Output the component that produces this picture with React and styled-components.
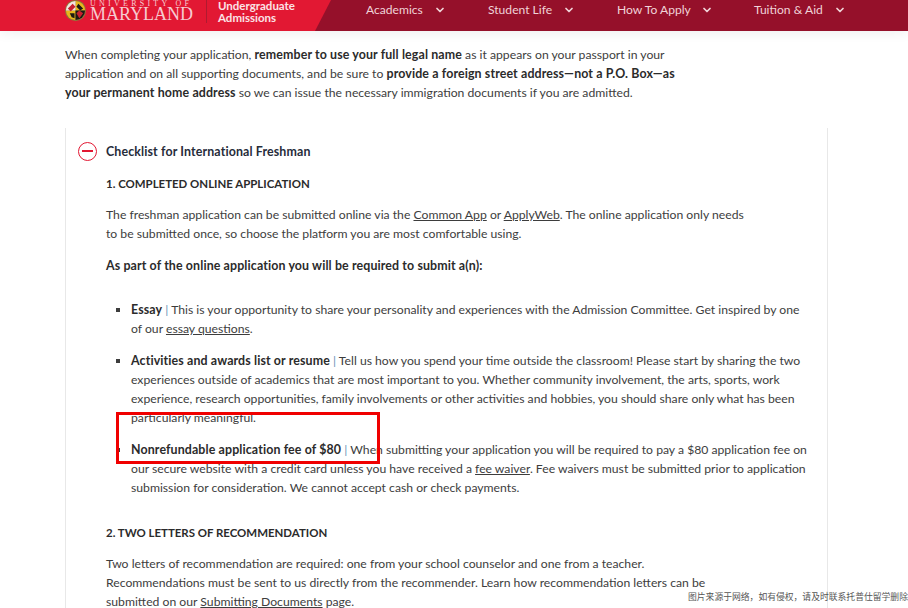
import styled, { createGlobalStyle } from 'styled-components';
import { ChevronDown } from 'lucide-react';

const Global = createGlobalStyle`
    html, body { margin: 0; padding: 0; background: #fff; }
    body {
        width: 908px;
        height: 608px;
        overflow: hidden;
        position: relative;
        font-family: "Lato", "Liberation Sans", sans-serif;
        color: #3d3d3d;
    }
`;

const Header = styled.header`
    height: 31px;
    display: flex;
    background: #95102a;
    box-shadow: 0 3px 12px rgba(0, 0, 0, 0.06);
`;
const Brand = styled.div`
    width: 331px;
    flex: none;
    padding-left: 65px;
    box-sizing: border-box;
    display: flex;
    align-items: flex-start;
    background: #e21833;
    clip-path: polygon(0 0, 100% 0, 315px 100%, 0 100%);
`;
const Seal = styled.svg`
    width: 21px;
    height: 21px;
    flex: none;
`;
const Wordmark = styled.div`
    margin-left: 4px;
    width: 103px;
    flex: none;
    color: #f6cbd1;
    font-family: "Liberation Serif", serif;
    display: flex;
    flex-direction: column;
`;
const WordTop = styled.span`
    font-size: 8px;
    line-height: 8px;
    letter-spacing: 3.25px;
    white-space: nowrap;
`;
const WordMain = styled.span`
    font-size: 18px;
    line-height: 13px;
    white-space: nowrap;
`;
const Divider = styled.div`
    width: 1px;
    height: 23px;
    flex: none;
    margin: 0 11px 0 13px;
    background: #b01a30;
`;
const Unit = styled.div`
    color: #fbe3e6;
    font-size: 11.5px;
    font-weight: 700;
    line-height: 11.5px;
    white-space: nowrap;
`;
const Nav = styled.nav`
    flex: 1;
    display: flex;
    align-items: flex-start;
    padding: 2px 0 0 35px;
`;
const NavItem = styled.a`
    display: flex;
    align-items: center;
    width: ${props => props.$w}px;
    flex: none;
    color: #f0d3d8;
    font-size: 12.1px;
    line-height: 15px;
    white-space: nowrap;
    svg {
        margin-left: ${props => props.$gap}px;
    }
`;
const Page = styled.main`
    padding: 14px 0 0 65px;
    width: 763px;
`;
const Text = styled.p`
    margin: 0;
    font-size: 12.2px;
    line-height: 19px;
    white-space: nowrap;
`;
const Panel = styled.section`
    margin-top: 26px;
    height: 480px;
    padding: 13px 0 0 12px;
    box-sizing: border-box;
    border-left: 1px solid #e8e8e8;
    border-right: 1px solid #e8e8e8;
`;
const PanelTitle = styled.div`
    display: flex;
    align-items: center;
    gap: 9px;
    height: 20px;
    font-size: 12.4px;
    letter-spacing: 0.13px;
    font-weight: 700;
    color: #262c3a;
`;
const Toggle = styled.span`
    width: 17px;
    height: 17px;
    border: 1.5px solid #e21833;
    border-radius: 50%;
    display: flex;
    align-items: center;
    justify-content: center;
    flex: none;
    &::before {
        content: "";
        width: 11px;
        height: 1.5px;
        background: #e21833;
    }
`;
const Body = styled.div`
    padding-left: 28px;
`;
const Step = styled.h3`
    margin: ${props => props.$top}px 0 0;
    font-size: 11.45px;
    line-height: 19px;
    font-weight: 700;
    color: #2b2b2b;
`;
const Para = styled(Text)`
    margin-top: ${props => props.$top}px;
`;
const Strong = styled.b`
    color: #2b2b2b;
    font-weight: 700;
    font-size: 12.4px;
    letter-spacing: 0.12px;
`;
const Ul = styled.ul`
    margin: 25px 0 0;
    padding: 0 0 0 25px;
    list-style: square;
`;
const Li = styled.li`
    margin-bottom: 13px;
    font-size: 12.2px;
    line-height: 19px;
    white-space: nowrap;
`;
const Link = styled.a`
    color: #3d3d3d;
    text-decoration: underline;
`;
const Pipe = styled.span`
    color: #6a93b8;
`;
const Highlight = styled.div`
    position: absolute;
    left: 116px;
    top: 412px;
    width: 258px;
    height: 46px;
    border: 3px solid #f00000;
`;
const Watermark = styled.div`
    position: absolute;
    left: 688px;
    top: 590px;
    font-family: "Noto Sans CJK SC", sans-serif;
    font-size: 8.8px;
    line-height: 14px;
    color: #555;
    white-space: nowrap;
`;

const navItems = [
    { label: 'Academics', w: 122, gap: 11 },
    { label: 'Student Life', w: 129, gap: 11 },
    { label: 'How To Apply', w: 137, gap: 10 },
    { label: 'Tuition & Aid', w: 100, gap: 11 },
];

const App = () => (
    <>
        <Global />
        <Header>
            <Brand>
                <Seal viewBox="0 0 22 22">
                    <circle cx="11" cy="11" r="11" fill="#8a7a3a" />
                    <path d="M11 1a10 10 0 0 1 10 10H11z" fill="#e8b71c" />
                    <path d="M11 21A10 10 0 0 1 1 11h10z" fill="#e8b71c" />
                    <path d="M11 1A10 10 0 0 0 1 11h10z" fill="#f3e4e0" />
                    <path d="M11 21a10 10 0 0 0 10-10H11z" fill="#1c1a14" />
                    <path d="M3 9l5-5 3 3-5 5zM12 14l3-3 4 3-4 5z" fill="#c8202f" />
                    <path d="M14 4l5 5-3 2-4-4zM5 14l5 0 0 5-3-1z" fill="#1c1a14" />
                </Seal>
                <Wordmark>
                    <WordTop>UNIVERSITY OF</WordTop>
                    <WordMain>MARYLAND</WordMain>
                </Wordmark>
                <Divider />
                <Unit>Undergraduate<br />Admissions</Unit>
            </Brand>
            <Nav>
                {navItems.map(item => (
                    <NavItem key={item.label} $w={item.w} $gap={item.gap}>
                        {item.label}
                        <ChevronDown size={12} strokeWidth={3.5} />
                    </NavItem>
                ))}
            </Nav>
        </Header>
        <Page>
            <Text>
                When completing your application, <Strong>remember to use your full legal name</Strong> as it appears on your passport in your<br />
                application and on all supporting documents, and be sure to <Strong>provide a foreign street address—not a P.O. Box—as</Strong><br />
                <Strong>your permanent home address</Strong> so we can issue the necessary immigration documents if you are admitted.
            </Text>
            <Panel>
                <PanelTitle><Toggle />Checklist for International Freshman</PanelTitle>
                <Body>
                    <Step $top={13}>1. COMPLETED ONLINE APPLICATION</Step>
                    <Para $top={12}>
                        The freshman application can be submitted online via the <Link>Common App</Link> or <Link>ApplyWeb</Link>. The online application only needs<br />
                        to be submitted once, so choose the platform you are most comfortable using.
                    </Para>
                    <Para $top={13}><Strong>As part of the online application you will be required to submit a(n):</Strong></Para>
                    <Ul>
                        <Li>
                            <Strong>Essay</Strong> <Pipe>|</Pipe> This is your opportunity to share your personality and experiences with the Admission Committee. Get inspired by one<br />
                            of our <Link>essay questions</Link>.
                        </Li>
                        <Li>
                            <Strong>Activities and awards list or resume</Strong> <Pipe>|</Pipe> Tell us how you spend your time outside the classroom! Please start by sharing the two<br />
                            experiences outside of academics that are most important to you. Whether community involvement, the arts, sports, work<br />
                            experience, research opportunities, family involvements or other activities and hobbies, you should share only what has been<br />
                            particularly meaningful.
                        </Li>
                        <Li>
                            <Strong>Nonrefundable application fee of $80</Strong> <Pipe>|</Pipe> When submitting your application you will be required to pay a $80 application fee on<br />
                            our secure website with a credit card unless you have received a <Link>fee waiver</Link>. Fee waivers must be submitted prior to application<br />
                            submission for consideration. We cannot accept cash or check payments.
                        </Li>
                    </Ul>
                    <Step $top={26}>2. TWO LETTERS OF RECOMMENDATION</Step>
                    <Para $top={12}>
                        Two letters of recommendation are required: one from your school counselor and one from a teacher.<br />
                        Recommendations must be sent to us directly from the recommender. Learn how recommendation letters can be<br />
                        submitted on our <Link>Submitting Documents</Link> page.
                    </Para>
                </Body>
            </Panel>
        </Page>
        <Highlight />
        <Watermark>图片来源于网络，如有侵权，请及时联系托普仕留学删除</Watermark>
    </>
);

export default App;
